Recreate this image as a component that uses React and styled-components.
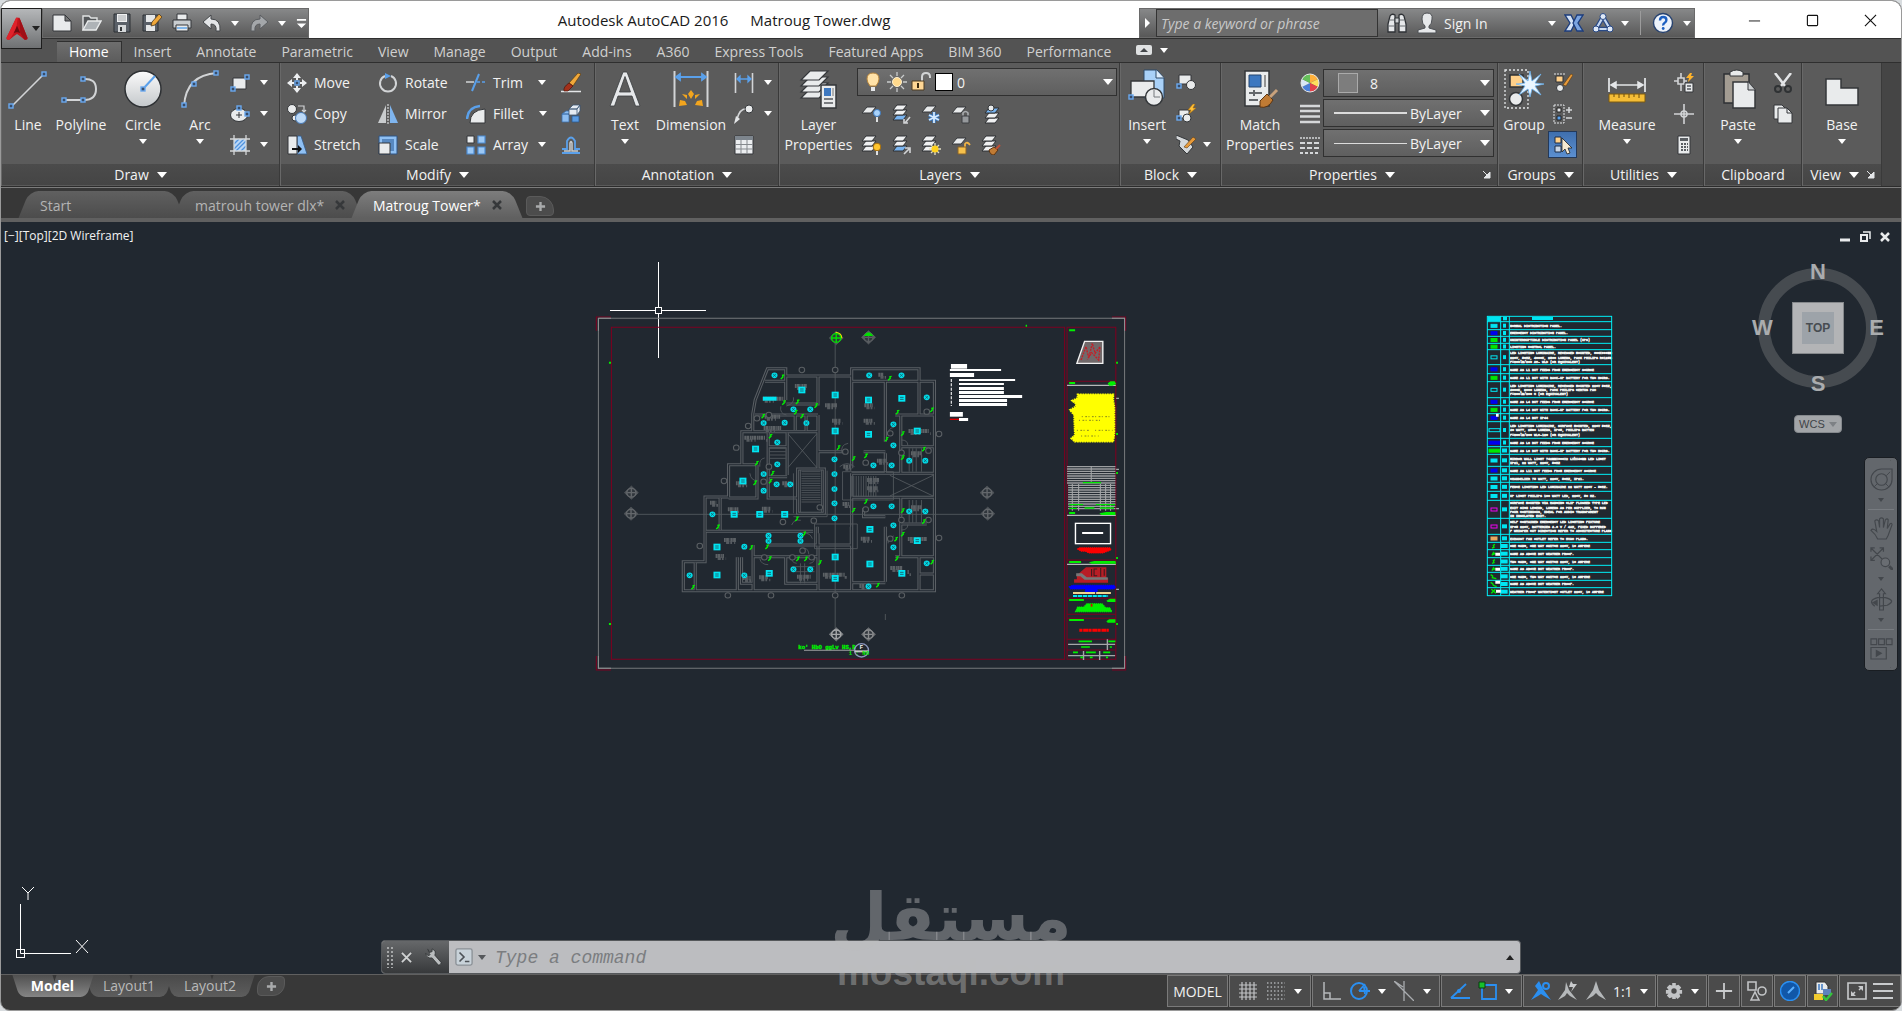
import { Fragment } from 'react'
import styled, { createGlobalStyle } from 'styled-components'

const GlobalStyle = createGlobalStyle`
    * {
        box-sizing: border-box;
    }
    body {
        margin: 0;
        background: #d8dcdf;
        font-family: "Open Sans", "Noto Sans", sans-serif;
        font-size: 14px;
        overflow: hidden;
    }
    button, input, select {
        font: inherit;
        color: inherit;
        background: none;
        border: 0;
        margin: 0;
        padding: 0;
    }
`

/* ---------- icons ---------- */

const paper = { fill: '#e9ebec', stroke: '#34373a', strokeWidth: 1 }
const wire = { fill: 'none', stroke: '#d2d4d6', strokeWidth: 1.6 }
const blue = { fill: 'none', stroke: '#5aa0ea', strokeWidth: 1.6 }

const Grip = ({ x, y }) => <rect x={x - 2} y={y - 2} width="4" height="4" fill="#3a4d68" stroke="#6aa9f0" strokeWidth="1.4" />

const Sheets = ({ blueAt, x = 0, y = 0 }) => [2, 1, 0].map(i => (
    <path
        key={i}
        d={`M${x + 5} ${y + 1 + i * 5}h10l-4 5h-10z`}
        fill={blueAt === i ? '#79b4f0' : '#f0f1f2'}
        stroke="#2e3134"
        strokeWidth="1"
    />
))

// every drawing is [viewBox size, content]
const drawings = {
    logo: [32, <>
        <path d="M15 2 3 27q0 3 4 2l5-4 4-3 4 3 5 4q4 1 4-2L19 2z" fill="#c3131b" />
        <path d="M15 2 3 27q0 3 4 2l8-13 2-14z" fill="#e0222b" />
        <path d="m16 12-4 9q4-2 8 0z" fill="#6d0a10" />
        <path d="m20 21 5 8q4 1 4-2L19 2z" fill="#9f0f16" />
    </>],
    newFile: [20, <path d="M1 2h12l6 6v10H1zM13 2v6h6" {...paper} />],
    open: [20, <>
        <path d="M1 17V3h6l2 2h6v3" fill="#55585b" stroke="#e1e3e4" strokeWidth="1.4" />
        <path d="m1 17 5-9h13l-5 9z" fill="#aeb3b7" stroke="#e9ebec" strokeWidth="1.4" />
    </>],
    save: [20, <>
        <path d="M2 1h16v18H2z" fill="#5a6068" stroke="#2d3034" />
        <path d="M5 1h10v8H5z" fill="#f0f1f2" />
        <path d="M6 3h8M6 5h8M6 7h8" stroke="#a7abae" />
        <path d="M6 12h8v7H6z" fill="#d5d8da" />
        <path d="M8 14h2v4H8z" fill="#34373a" />
    </>],
    saveAs: [20, <>
        <path d="M1 2h15v16H1z" fill="#5a6068" stroke="#2d3034" />
        <path d="M4 2h9v7H4zM4 12h9v6H4z" fill="#e5e7e8" />
        <path d="m9 13 1-4 7-8 3 3-7 8z" fill="#f0a83a" stroke="#4c3a20" strokeWidth=".8" />
    </>],
    print: [20, <>
        <path d="M5 1h10v6H5z" {...paper} />
        <path d="M1 7h18v8H1z" fill="#c9cdd0" stroke="#34373a" />
        <path d="M4 12h12v6H4z" {...paper} />
        <path d="M5 15h10" stroke="#60a6ea" strokeWidth="1.5" />
    </>],
    undo: [20, <path d="M1 9 9 2v4q10 0 9 12h-4q1-7-5-7v5z" fill="#e4e6e8" stroke="#44474a" />],
    redo: [20, <path d="m19 9-8-7v4Q1 6 2 18h4q-1-7 5-7v5z" fill="#a4a7aa" stroke="#5a5d60" />],
    menuLine: [12, <path d="M1 1h10v2H1zM1 6h10l-5 5z" fill="#fff" />],
    binoculars: [22, <>
        <path d="M4 4q2-3 5-1v17H2v-8zM18 4q-2-3-5-1v17h7v-8z" fill="#e6e8ea" stroke="#2f3236" strokeWidth="1.3" />
        <path d="M9 6h4v5H9z" fill="#cfd2d4" stroke="#2f3236" />
        <path d="M2 14h7M13 14h7M4 8h4M14 8h4" stroke="#6a6e72" />
    </>],
    person: [22, <path d="M11 1q6 0 5 6 0 5-3 7v2l7 2v3H2v-3l7-2v-2q-3-2-3-7 0-6 5-6z" fill="#e6e8ea" stroke="#4d5054" />],
    exchange: [20, <>
        <path d="M1 2h6l4 8-4 8H1l5-8z" fill="#d3e2f6" stroke="#1c3c7c" strokeWidth="1.3" />
        <path d="M19 2h-6l-4 8 4 8h6l-5-8z" fill="#7ba4e0" stroke="#1c3c7c" strokeWidth="1.3" />
    </>],
    a360: [22, <>
        <path d="M11 5 18 17H4z" fill="none" stroke="#2a4a86" strokeWidth="4.500" strokeLinejoin="round" />
        <path d="M11 5 18 17H4z" fill="none" stroke="#c7d9f2" strokeWidth="2.200" strokeLinejoin="round" />
        <g fill="#dfe9f7" stroke="#2a4a86"><circle cx="11" cy="4.500" r="3" /><circle cx="4" cy="17" r="3" /><circle cx="18" cy="17" r="3" /></g>
    </>],
    help: [22, <>
        <circle cx="11" cy="11" r="9.500" fill="#eef3fa" stroke="#27426f" strokeWidth="1.400" />
        <path d="M8 8.500q0-3.500 3.200-3.500t3.200 3q0 1.800-1.700 2.700T11.200 13.500" fill="none" stroke="#1d5fc0" strokeWidth="2.400" />
        <circle cx="11.200" cy="16.500" r="1.400" fill="#1d5fc0" />
    </>],
    minimize: [14, <path d="M1 7.500h12" stroke="#111" />],
    maximize: [14, <rect x="1.500" y="1.500" width="11" height="11" rx="1" fill="none" stroke="#111" strokeWidth="1.200" />],
    close: [14, <path d="m1 1 12 12M13 1 1 13" stroke="#111" strokeWidth="1.200" />],
    collapse: [16, <>
        <rect x="0" y="3" width="16" height="10" rx="2" fill="#dfe1e2" />
        <path d="m4 10 4-4 4 4z" fill="#44474a" />
    </>],
    line: [40, <><path d="M3 38 36 5" {...wire} /><Grip x={3} y={37} /><Grip x={36} y={5} /></>],
    polyline: [40, <>
        <path d="M3 31h20q12 0 12-11T22 10" {...wire} strokeWidth="2" />
        <Grip x={3} y={31} /><Grip x={22} y={31} /><Grip x={22} y={10} />
    </>],
    circle: [40, <>
        <circle cx="20" cy="20" r="18" fill="url(#disc)" stroke="#2e3134" strokeWidth="1.500" />
        <path d="M20 20 32 7" stroke="#5aa0ea" strokeWidth="2" /><Grip x={20} y={20} />
    </>],
    arc: [40, <><path d="M4 37Q6 6 37 4" {...wire} strokeWidth="2" /><Grip x={4} y={36} /><Grip x={14} y={15} /><Grip x={36} y={4} /></>],
    rectangle: [20, <><path d="M3 5h13v11H3z" {...paper} /><Grip x={3} y={16} /><Grip x={17} y={4} /></>],
    ellipse: [20, <><ellipse cx="9" cy="11" rx="8.500" ry="6.500" {...paper} /><path d="M9 8v6M6 11h6" stroke="#34373a" /><Grip x={9} y={4} /><Grip x={17} y={10} /></>],
    hatch: [20, <>
        <path d="M4 4h12v12H4z" fill="#b9d6f6" />
        <path d="m4 9 5-5M4 14 14 4M6 16 16 6M11 16l5-5" stroke="#4f92dd" strokeWidth="1.300" />
        <path d="M0 4h20M0 16h20M4 0v20M16 0v20" stroke="#d5d7d9" strokeWidth="1.300" />
    </>],
    move: [20, <>
        <path d="m10 0 4 5H6zM10 20l4-5H6zM0 10l5-4v8zM20 10l-5-4v8z" fill="#eceef0" />
        <path d="M10 4v3M10 13v3M4 10h3M13 10h3" stroke="#eceef0" strokeWidth="2" />
        <Grip x={10} y={10} />
    </>],
    copy: [20, <>
        <circle cx="5" cy="5" r="4.500" {...paper} />
        <circle cx="8" cy="14" r="3" {...paper} />
        <circle cx="14" cy="14" r="5.500" fill="#bcd9f7" stroke="#4779b5" />
        <path d="M11 2h6v5M15 6l2 2 2-2" {...wire} strokeWidth="1.200" />
    </>],
    stretch: [20, <>
        <path d="M10 1h4l6 18H10z" fill="#8fc0f3" stroke="#345a8a" strokeWidth=".8" />
        <path d="M1 1h9v18H1z" {...paper} />
        <path d="M5 13h6v-3l4 4-4 4v-3H5z" fill="#111" />
    </>],
    rotate: [20, <><path d="M13 3a8 8 0 1 1-6 0" {...wire} strokeWidth="2" /><path d="m7 0 6 3-6 3z" fill="#5aa0ea" /></>],
    mirror: [20, <><path d="M8 1v18H0z" fill="#c9ccce" /><path d="M12 1v18h8z" fill="#7fb5ef" /><path d="M10 0v20" stroke="#eceef0" strokeDasharray="2 1" /></>],
    scale: [20, <><path d="M1 1h18v18H1z" fill="#8fc0f3" stroke="#2f5584" /><path d="M4 4h12v12H4z" fill="#5788c0" /><path d="M1 8h11v11H1z" {...paper} /></>],
    trim: [20, <><path d="M0 9h8" {...wire} /><path d="M11 9h9" {...blue} strokeDasharray="3 2" /><path d="m6 18 7-17" {...blue} strokeWidth="2" /></>],
    fillet: [20, <><path d="M4 19q0-13 15-14v14z" {...paper} /><path d="M1 15Q2 3 14 2" {...blue} strokeWidth="2.500" /></>],
    array: [20, <>
        <path d="M1 1h7v7H1z" {...paper} />
        <path d="M12 1h7v7h-7zM1 12h7v7H1zM12 12h7v7h-7z" fill="#9cc8f5" stroke="#4b8bd4" strokeWidth="1.200" />
    </>],
    erase: [20, <>
        <path d="M0 18.500h20" stroke="#e4e6e8" strokeWidth="1.500" />
        <path d="m8 10 9-10 3 1-8 12z" fill="#f0a83a" stroke="#5c3d12" strokeWidth=".7" />
        <path d="m8 10 4 3-5 5H3q-1-4 5-8z" fill="#a3301a" stroke="#4a150b" strokeWidth=".7" />
    </>],
    explode: [20, <>
        <path d="m1 10 4-3h6l-3 3zM1 10h7v8H1z" fill="#8dbdf0" stroke="#3c6ea9" strokeWidth=".8" />
        <path d="m8 5 4-4h7l-3 4zM8 5h8v6H8zM16 5l3-4v6l-3 4" fill="#e5ebf2" stroke="#3c5775" strokeWidth=".8" />
        <path d="M11 12h7v6h-7z" fill="#5a9be2" stroke="#2c5b93" strokeWidth=".8" />
    </>],
    offset: [20, <>
        <path d="M1 18h18M1 14h5V6q4-7 8 0v8h5" fill="none" stroke="#5aa0ea" strokeWidth="1.800" />
        <path d="M3 16h6V8q1-3 2 0v8h6" fill="none" stroke="#c9cbcd" strokeWidth="1.500" />
    </>],
    text: [40, <path d="M5 37 18 3h4l13 34h-4.500L27 27H13L9.500 37zM14.500 23h11L20 7.500z" fill="#e6e8ea" stroke="#3a3d40" strokeWidth=".8" />],
    dimension: [40, <>
        <path d="M3.500 2v36M36.500 2v36" {...wire} strokeWidth="2" />
        <path d="M5 8h30M5 8l4-3v6zM35 8l-4-3v6z" stroke="#5aa0ea" strokeWidth="1.800" fill="#5aa0ea" />
        <path d="m8 37 1-6 5 1 2 4zM32 37l-1-6-5 1-2 4zM11 25l5 1v4zM29 25l-5 1v4zM20 21l3 4-3 5-3-5z" fill="#f2a51e" />
    </>],
    linear: [20, <><path d="M1.500 0v20M18.500 0v20" {...wire} /><path d="M3 6h14M3 6l3-3v6zM17 6l-3-3v6z" {...blue} fill="#5aa0ea" strokeWidth="1.300" /></>],
    leader: [20, <><path d="M3 15Q6 4 13 5" {...wire} /><path d="m0 20 2-8 4 3z" fill="#e4e6e8" /><circle cx="15" cy="5" r="4" {...paper} /></>],
    table: [20, <>
        <path d="M1 1h18v18H1z" fill="#eceef0" stroke="#34373a" />
        <path d="M1 1h18v4H1z" fill="#7d858d" />
        <path d="M7 5v14M13 5v14M1 9.500h18M1 14h18" stroke="#85898d" />
    </>],
    layerProps: [40, <>
        {[20, 14, 8, 2].map(y => <path key={y} d={`M11 ${y}h18l-9 9H2z`} {...paper} strokeWidth="1.200" />)}
        <path d="M22 16h15v23H22z" {...paper} strokeWidth="1.500" />
        <path d="M25 19h7v8h-7z" fill="#3d78c0" />
        <path d="M25 30h9M25 34h9" stroke="#55595d" strokeWidth="1.500" />
        <path d="M34 19v8" stroke="#777" />
    </>],
    bulb: [20, <><path d="M10 1q6 0 6 6 0 3-3 7H7Q4 10 4 7q0-6 6-6z" fill="#ffe2a8" stroke="#b9863c" /><path d="M8 15h4v4H8z" fill="#e6e8ea" /></>],
    sun: [20, <><path d="M10 0v4M10 16v4M0 10h4M16 10h4M3 3l3 3M14 14l3 3M17 3l-3 3M3 17l3-3" stroke="#c9cbcc" strokeWidth="1.300" /><circle cx="10" cy="10" r="4.500" fill="#ffd98c" stroke="#fff1d0" /></>],
    unlock: [20, <><path d="M11 10V5q0-4 4-4t4 4v1" {...wire} strokeWidth="2" /><path d="M1 9h12v9H1z" fill="#ffd795" stroke="#4c3a20" /><path d="M7 11v5" stroke="#3b2a10" strokeWidth="2" /></>],
    layOff: [20, <><path d="M6 3h9l-5 6H1z" {...paper} /><circle cx="16" cy="9" r="3.500" fill="#a9d3fb" stroke="#3c78bd" /><path d="M15 13h2v5h-2z" fill="#dfe1e2" /></>],
    layIso: [20, <><Sheets blueAt={2} x={1} /><path d="m19 13-5 6M13 15v4h4" {...wire} /></>],
    layFreeze: [20, <><path d="M6 2h9l-5 6H1z" {...paper} /><path d="M13 8v11M8 11l10 5M18 11 8 16" stroke="#3c78bd" strokeWidth="3.500" /><path d="M13 8v11M8 11l10 5M18 11 8 16" stroke="#d5eafe" strokeWidth="1.800" /></>],
    layLock: [20, <><path d="M6 3h9l-5 6H1z" {...paper} /><path d="M12 13V9q2.500-3 5 0v4" {...wire} stroke="#a9acaf" /><path d="M11 12h7v7h-7z" fill="#96999c" stroke="#3c3f42" /></>],
    layCurrent: [20, <><Sheets blueAt={0} x={3} y={3} /><circle cx="10" cy="4" r="3" {...paper} /></>],
    layOn: [20, <><Sheets /><circle cx="16" cy="12" r="3.800" fill="#ffc52e" stroke="#a56d0c" /><path d="M15 16h2v4h-2z" fill="#dfe1e2" /></>],
    layUniso: [20, <><Sheets blueAt={2} x={1} /><path d="m13 19 5-5M14 13h5v5" {...wire} /></>],
    layThaw: [20, <><Sheets /><path d="M14 8v12M8 14h12M10 10l8 8M18 10l-8 8" stroke="#e3e0c8" strokeWidth="1.300" /><circle cx="14" cy="14" r="3.500" fill="#ffd21f" /></>],
    layUnlock: [20, <><path d="M6 3h9l-5 6H1z" {...paper} /><path d="M14 13V9q2-3 5 1" fill="none" stroke="#f1b445" strokeWidth="1.800" /><path d="M7 12h8v7H7z" fill="#f5c04b" stroke="#8c6428" /></>],
    layMatch: [20, <><Sheets /><path d="m8 15 5-3 4 3-4 5q-4 0-5-5z" fill="#c07b34" stroke="#5c3512" /><path d="m15 14 4-4" stroke="#c24f36" strokeWidth="2" /></>],
    insert: [40, <>
        <path d="M17 1h13l7 8v20H17z" fill="#a9d1f8" stroke="#2f4a69" />
        <path d="M29 1v8h8" fill="#dcecfb" stroke="#2f4a69" />
        <path d="M4 12h23v16H4z" {...paper} strokeWidth="1.300" />
        <circle cx="27" cy="28" r="8.500" {...paper} strokeWidth="1.500" />
        <path d="M27 21v7h6" stroke="#74787c" fill="none" /><Grip x={4} y={28} />
    </>],
    blockCreate: [20, <><path d="M3 2h12v9H3z" {...paper} /><circle cx="15" cy="12" r="4.500" {...paper} /><Grip x={3} y={13} /></>],
    blockEdit: [20, <><path d="M3 6h10v8H3z" {...paper} /><circle cx="11" cy="14" r="4" {...paper} /><path d="m17 0-5 6h3l-2 4 7-6h-3l2-4z" fill="#ffc13a" stroke="#a86b0c" strokeWidth=".6" /><Grip x={3} y={14} /></>],
    blockAttr: [20, <><path d="M0 0v4l4 2-1 5 8 8 6-7-5-7z" fill="#d5d8da" stroke="#34373a" /><path d="m8 12 9-10 3 2-9 9z" fill="#e79a3a" stroke="#5c3d12" strokeWidth=".6" /></>],
    match: [40, <>
        <path d="M5 2h24v35H5z" {...paper} strokeWidth="1.500" />
        <path d="M9 6h12v12H9z" fill="#3d78c0" stroke="#24446f" /><path d="M25 6v12" stroke="#777" strokeWidth="1.500" />
        <path d="M9 24h13M14 21v6M9 31h9" stroke="#64686c" strokeWidth="2" />
        <path d="m20 32 7-7 6 6q-5 9-13 7z" fill="#c07b34" stroke="#5c3512" /><path d="m30 28 7-7" stroke="#c9a27c" strokeWidth="3" />
    </>],
    wheel: [20, <>
        <path d="M10 10V1a9 9 0 0 1 8 5z" fill="#ffb13c" /><path d="m10 10 8-4a9 9 0 0 1 0 8z" fill="#ffe05c" />
        <path d="m10 10 8 4a9 9 0 0 1-8 5z" fill="#e3434a" /><path d="M10 10v9a9 9 0 0 1-8-5z" fill="#4b7fd8" />
        <path d="m10 10-8 4a9 9 0 0 1 0-8z" fill="#d9e7f5" /><path d="M10 10 2 6a9 9 0 0 1 8-5z" fill="#65c05a" />
        <circle cx="10" cy="10" r="9" fill="none" stroke="#e4e6e8" />
    </>],
    weight: [20, <path d="M0 2h20M0 7h20M0 12.500h20M0 18h20" stroke="#d5d7d9" strokeWidth="2.500" />],
    ltype: [20, <><path d="M0 3h20" stroke="#d5d7d9" strokeWidth="1.500" strokeDasharray="2 1" /><path d="M0 8h20M0 13h20" stroke="#d5d7d9" strokeWidth="1.800" strokeDasharray="5 2" /><path d="M0 18h20" stroke="#d5d7d9" strokeWidth="1.800" strokeDasharray="3 2" /></>],
    group: [40, <>
        <path d="M1 1h23v38H1z" fill="none" stroke="#e4e6e8" strokeWidth="1.300" strokeDasharray="2 2" />
        <path d="M6 6h13v12H6z" fill="#ffd08a" stroke="#2e3134" strokeWidth="1.500" />
        <circle cx="12" cy="30" r="6.500" {...paper} strokeWidth="1.500" />
        <path d="m26 2 2 10 9-7-6 9 9 1-9 2 6 9-9-6-2 8-2-8-9 6 6-9-9-2 9-1-6-9 9 7z" fill="#eaf6ff" stroke="#6cb2ef" strokeWidth=".8" />
    </>],
    ungroup: [20, <><path d="M1 1h11" fill="none" stroke="#e4e6e8" strokeDasharray="2 1" /><path d="M3 3h7v6H3z" fill="#ffd08a" stroke="#2e3134" /><circle cx="7" cy="15" r="3.500" {...paper} /><path d="m10 12 8-11 2 1-7 11z" fill="#e79a3a" stroke="#5c3d12" strokeWidth=".6" /></>],
    groupEdit: [20, <><path d="M1 1h10v18H1z" fill="none" stroke="#e4e6e8" strokeDasharray="2 1" /><path d="M4 4h4v4H4z" fill="#e4e6e8" stroke="#222" /><path d="M4 12h4v4H4z" fill="#5aa0ea" stroke="#222" /><path d="M13 6h6M16 3v6M13 14h6" stroke="#d5d7d9" strokeWidth="1.500" /></>],
    groupSelect: [20, <><path d="M2 2h6v6H2z" fill="#ffd08a" stroke="#1c2c46" /><path d="M2 11h6v6H2z" fill="#c9d6e6" stroke="#1c2c46" /><path d="M9 3v14l3-3 2 5 3-1-2-5h4z" fill="#f5e9d2" stroke="#222" strokeWidth=".8" /></>],
    measure: [40, <>
        <path d="M2 9v14M38 9v14" {...wire} strokeWidth="2" />
        <path d="M4 16h32M4 16l5-3v6zM36 16l-5-3v6z" fill="#e4e6e8" stroke="#e4e6e8" strokeWidth="1.500" />
        <path d="M2 25h36v8H2z" fill="#f4bd37" stroke="#7c5a10" />
        <path d="M7 25v3M12 25v4M17 25v3M22 25v4M27 25v3M32 25v4" stroke="#6c4d0c" />
    </>],
    quickCalc: [20, <><path d="M7 0v18M0 8h13" {...wire} /><path d="M4 5h6v6H4z" fill="#5b5b5b" stroke="#d2d4d6" strokeWidth="1.600" /><path d="m16 0-4 5h3l-1 4 6-6h-3l1-3z" fill="#ffb32a" /><path d="M11 10h8v9h-8z" {...paper} /><path d="M13 13h4M13 16h4" stroke="#55595d" strokeWidth="1.300" /></>],
    point: [20, <><path d="M10 0v20M0 10h20" {...wire} /><circle cx="10" cy="10" r="3" {...wire} /></>],
    calculator: [20, <><path d="M4 1h12v18H4z" {...paper} /><path d="M6 3h8v3H6z" fill="#5a5e62" /><path d="M7 9h7M7 12h7M7 15h7" stroke="#5a5e62" strokeWidth="2" strokeDasharray="2 1" /></>],
    paste: [40, <>
        <path d="M6 5h25v29H6z" fill="#a39c92" stroke="#2e3134" strokeWidth="1.500" />
        <path d="M12 7V3q7-4 13 0v4z" {...paper} />
        <path d="M15 13h15l7 8v18H15z" {...paper} strokeWidth="1.500" /><path d="M30 13v8h7" fill="#cfd2d4" stroke="#34373a" />
    </>],
    cut: [20, <><path d="m2 0 10 13M18 0 8 13" stroke="#e4e6e8" strokeWidth="2.500" /><circle cx="5" cy="16" r="3" fill="none" stroke="#2f3234" strokeWidth="2" /><circle cx="15" cy="16" r="3" fill="none" stroke="#2f3234" strokeWidth="2" /></>],
    copyClip: [20, <><path d="M1 1h8l3 3v11H1z" {...paper} /><path d="M5 4h9l5 5v10H5z" {...paper} /><path d="M14 4v5h5" fill="none" stroke="#34373a" /></>],
    base: [40, <path d="M4 10h15v9h17v17H4z" {...paper} strokeWidth="1.500" />],
    wrench: [20, <path d="m4 1 2 4 3-1V1q5 2 3 7l7 8q0 3-3 3l-7-8Q3 12 2 6l3 3 2-2" fill="#b9bcbe" stroke="#2a2c2e" strokeWidth=".8" />],
    prompt: [20, <><rect x="1" y="1" width="18" height="18" rx="2" fill="#c8d2d9" stroke="#8b9197" strokeWidth="1.500" /><path d="m5 5 5 5-5 5M11 15h5" fill="none" stroke="#4d5257" strokeWidth="1.800" /></>],
    grid: [20, <path d="M4 1v18M8 1v18M12 1v18M16 1v18M1 4h18M1 8h18M1 12h18M1 16h18" stroke="#c2c4c6" strokeWidth="1.200" fill="none" />],
    snap: [20, <path d="M1 2h18M1 6h18M1 10h18M1 14h18M1 18h18" stroke="#a9acaf" strokeWidth="1.500" strokeDasharray="1.500 2" />],
    ortho: [20, <path d="M3 1v17h17M3 12h6v6" fill="none" stroke="#b5b8ba" strokeWidth="1.500" />],
    polar: [20, <><circle cx="9" cy="10" r="8" fill="none" stroke="#2b8ff0" strokeWidth="2" /><path d="m9 10 6-7M9 10h11M14 6l1 7" fill="none" stroke="#2b8ff0" strokeWidth="1.800" /></>],
    iso: [20, <path d="m0 0 20 20M10 0v20M0 0l9 6" fill="none" stroke="#a9acaf" strokeWidth="1.300" />],
    track: [20, <><path d="M1 17 16 3M1 17h19" stroke="#2b8ff0" strokeWidth="1.800" /><circle cx="9" cy="10" r="2" fill="#2b8ff0" /></>],
    osnap: [20, <><path d="M4 4h14v14H4z" fill="none" stroke="#2b8ff0" strokeWidth="1.800" /><path d="M1 1h6v6H1z" fill="#18c02b" stroke="#093d10" /></>],
    annoBlue: [20, <><path d="m8 0 4 8 8 11-7-4-3-2-3 2-7 4 7-10-3-4z" fill="#2b8ff0" /><circle cx="15" cy="5" r="3" fill="#4b4b4b" stroke="#2b8ff0" strokeWidth="2" /></>],
    annoAuto: [20, <><path d="m8 1 3 8 8 10-7-4-3-3-2 3-7 4 7-10z" fill="#b5b8ba" /><path d="m13 0-2 6h4l-2 5 6-8h-4z" fill="#c9cbcd" /></>],
    anno: [20, <path d="m10 0 3 9 7 10-7-4-3-3-3 3-7 4L7 9z" fill="#b5b8ba" />],
    gear: [20, <><path d="M8 1h4v3l3-1 3 3-2 3h3v4h-3l1 3-3 3-2-2v2H8v-2l-3 1-3-3 2-2H1V9h3L2 6l3-3 3 1z" fill="#c2c4c6" /><circle cx="10" cy="10" r="3" fill="#4b4b4b" /></>],
    plus: [20, <path d="M10 1v18M1 10h18" stroke="#c9cbcd" strokeWidth="2" />],
    shapes: [20, <><path d="M1 1h8v8H1z" fill="none" stroke="#c2c4c6" strokeWidth="1.600" /><circle cx="15" cy="10" r="4" fill="none" stroke="#c2c4c6" strokeWidth="1.600" /><path d="m8 11 4 8H4z" fill="none" stroke="#c2c4c6" strokeWidth="1.500" /></>],
    clean: [20, <><circle cx="10" cy="10" r="9.500" fill="#1157a8" stroke="#2b8ff0" strokeWidth="1.500" /><path d="m8 12 6-6" stroke="#5ab0ff" strokeWidth="2" /></>],
    tray: [20, <><path d="M3 1h9l3 4v8H3z" fill="#e9ebec" stroke="#333" /><path d="M6 3v6M9 3v6" stroke="#3d78c0" strokeWidth="1.500" /><path d="M10 8h8v6h-8z" fill="#5d83bd" /><path d="M1 13h9v6H1z" fill="#f3cc2e" /><path d="m10 15 3 4 6-7" fill="none" stroke="#35c43c" strokeWidth="2.500" /></>],
    expand: [20, <><path d="M1 2h18v16H1z" fill="none" stroke="#c9cbcd" strokeWidth="1.600" /><path d="M11 5h5v5zM4 10v5h5z" fill="#c9cbcd" /><path d="m12 9 3-3M5 14l3-3" stroke="#c9cbcd" strokeWidth="1.500" /></>],
    burger: [20, <path d="M0 3h20M0 10h20M0 17h20" stroke="#c9cbcd" strokeWidth="2" />],
    launcher: [10, <path d="M1 1l6 6M8 2v6H2z" stroke="#e4e6e8" fill="#e4e6e8" />],
    vpMin: [12, <path d="M1 9h10" stroke="#e9ebec" strokeWidth="3" />],
    vpRestore: [12, <><path d="M4 1h7v7" fill="none" stroke="#e9ebec" strokeWidth="1.500" /><path d="M2 4h6v6H2z" fill="none" stroke="#e9ebec" strokeWidth="2" /></>],
    vpClose: [12, <path d="m2 2 8 8M10 2l-8 8" stroke="#e9ebec" strokeWidth="2.500" />],
    tabClose: [12, <path d="m2 2 8 8M10 2l-8 8" stroke="#36383a" strokeWidth="2.500" />],
    barClose: [12, <path d="m1 1 10 10M11 1 1 11" stroke="#d0d2d3" strokeWidth="2" />],
    tabPlus: [12, <path d="M6 1v10M1 6h10" stroke="#a9abac" strokeWidth="2.600" />],
    navWheel: [24, <><path d="M12 1h11v11a11 11 0 1 1-11-11z" fill="none" stroke="#43474c" strokeWidth="1.200" /><circle cx="12" cy="12" r="6" fill="none" stroke="#43474c" strokeWidth="1.200" /><path d="m8 16-4 4M16 16l4 4M17 8l4-4" stroke="#43474c" /></>],
    hand: [24, <path d="M8 23q-2-5-7-9 2-3 6 1L5 4q2-2 4 0l1 7V2q2-2 4 0v9l2-8q2-2 3 0l-1 9 3-5q2-1 2 1l-4 11-2 4z" fill="none" stroke="#43474c" strokeWidth="1.200" />],
    zoom: [24, <><path d="m1 1 13 13M14 1 1 14M1 5V1h4M10 1h4v4M1 10v4h4" fill="none" stroke="#43474c" strokeWidth="1.300" /><circle cx="16" cy="16" r="4.500" fill="#696d72" stroke="#43474c" strokeWidth="1.200" /><path d="m20 20 4 4" stroke="#43474c" strokeWidth="3" /></>],
    orbit: [24, <><path d="M5 19Q-3 13 8 10h8q12 3 2 8l-8 1" fill="none" stroke="#43474c" strokeWidth="1.300" /><path d="M10 23V6H8l4-5 4 5h-2v17z" fill="none" stroke="#43474c" strokeWidth="1.200" /><path d="m2 15 6-3v7z" fill="#43474c" /></>],
    motion: [24, <><path d="M1 2h6v6H1zM9 2h6v6H9zM17 2h6v6h-6zM1 11h16v12H1z" fill="none" stroke="#43474c" strokeWidth="1.200" /><path d="m6 13 7 4-7 4z" fill="#43474c" /></>],
    dot: [10, <><circle cx="5" cy="5" r="4.500" fill="#4c5055" /><path d="m3 3 4 4M7 3 3 7" stroke="#777b80" /></>],
}

const Icon = ({ name, size = 20 }) => {
    const [box, content] = drawings[name]
    return <svg width={size} height={size} viewBox={`0 0 ${box} ${box}`} aria-hidden="true">{content}</svg>
}

const Caret = styled.span`
    flex: none;
    width: 0;
    height: 0;
    border: ${({ $size = 4 }) => $size}px solid transparent;
    border-bottom-width: 0;
    border-top: ${({ $size = 4 }) => $size + 1}px solid ${({ $color }) => $color || '#fff'};
`

/* ---------- window and title bar ---------- */

const Window = styled.div`
    display: flex;
    flex-direction: column;
    height: 100vh;
    border: 1px solid #9a9a9a;
    border-radius: 10px;
    overflow: hidden;
    background: #383838;
    color: #f2f2f2;
`

const TitleBar = styled.header`
    display: flex;
    align-items: flex-end;
    height: 37px;
    background: #fff;
    flex: none;
`

const AppButton = styled.button`
    position: relative;
    z-index: 1;
    display: flex;
    align-items: center;
    justify-content: center;
    gap: 2px;
    width: 41px;
    height: 41px;
    margin-bottom: -11px;
    background: linear-gradient(#b5b7b9, #6f7173);
    border: 1px solid #1d1d1d;
`

const ToolStrip = styled.div`
    display: flex;
    align-items: center;
    height: 30px;
    background: linear-gradient(#878889, #585858);
    border: 1px solid #6a6a6a;
`

const QuickAccess = styled(ToolStrip)`
    gap: 10px;
    width: 267px;
    padding-left: 9px;
`

const FlatButton = styled.button`
    display: flex;
    align-items: center;
    gap: ${({ $gap = 0 }) => $gap}px;
    flex: none;
`

const Title = styled.h1`
    flex: 1;
    display: flex;
    justify-content: center;
    gap: 22px;
    margin: 0;
    font-size: 15px;
    font-weight: 400;
    line-height: 36px;
    color: #1a1a1a;
    white-space: nowrap;
`

const InfoCenter = styled(ToolStrip)`
    width: 556px;
    gap: 8px;
    padding: 0 3px 0 5px;
`

const SearchInput = styled.input`
    width: 225px;
    height: 28px;
    padding: 0 4px;
    background: #6d6d6d;
    border: 1px solid #333;
    &::placeholder {
        color: #c9c9c9;
        font-style: italic;
        opacity: 1;
    }
`

const SideArrow = styled.span`
    border: 5px solid transparent;
    border-left-color: #fff;
    border-right-width: 0;
    margin-right: -2px;
`

const SignIn = styled.button`
    display: flex;
    align-items: center;
    gap: 6px;
    width: 142px;
    span:last-child {
        margin-left: auto;
    }
`

const Divider = styled.span`
    width: 1px;
    height: 24px;
    background: #9c9c9c;
    margin: 0 3px;
`

const WindowButtons = styled.div`
    display: flex;
    justify-content: flex-end;
    width: 206px;
    height: 36px;
    padding-right: 2px;
`

const WindowButton = styled.button`
    display: flex;
    align-items: center;
    justify-content: center;
    width: 58px;
`

/* ---------- ribbon ---------- */

const RibbonTabs = styled.nav`
    display: flex;
    align-items: stretch;
    height: 25px;
    padding: 2px 0 0 56px;
    background: #535353;
    border-top: 1px solid #2f2f2f;
    border-bottom: 1px solid #2f2f2f;
    flex: none;
`

const RibbonTab = styled.button`
    padding: 0 12px;
    line-height: 20px;
    color: ${({ $active }) => $active ? '#fff' : '#d0d0d0'};
    background: ${({ $active }) => $active ? 'linear-gradient(#6e6e6e, #5c5c5c)' : 'none'};
    border: 1px solid ${({ $active }) => $active ? '#2f2f2f' : 'transparent'};
    border-width: 1px 1px 0 0;
    white-space: nowrap;
`

const Ribbon = styled.section`
    display: flex;
    height: 124px;
    background: #454545;
    border-bottom: 1px solid #2c2c2c;
    flex: none;
`

const PanelBox = styled.div`
    display: flex;
    flex-direction: column;
    width: ${({ $width }) => $width}px;
    flex: none;
    border-right: 1px solid #3a3a3a;
    border-left: 1px solid #686868;
    background: #5b5b5b;
`

const PanelBody = styled.div`
    display: grid;
    grid-template-columns: ${({ $columns }) => $columns};
    height: 101px;
    padding-top: 4px;
`

const PanelTitle = styled.button`
    display: flex;
    align-items: center;
    flex: 1;
    padding-right: ${({ $tight }) => $tight ? 5 : 0}px;
    background: linear-gradient(#4b4b4b, #454545);
    border-bottom: 1px solid #5a5a5a;
    line-height: 20px;
    white-space: nowrap;
`

const PanelName = styled.span`
    flex: 1;
    display: flex;
    align-items: center;
    justify-content: center;
    gap: 8px;
`

const LargeButton = styled.button`
    display: flex;
    flex-direction: column;
    align-items: center;
    align-self: start;
    padding-top: 2px;
    line-height: 20px;
    svg {
        margin-bottom: 6px;
    }
    ${Caret} {
        margin-top: 4px;
    }
`

const SmallColumn = styled.div`
    display: grid;
    grid-template-rows: repeat(3, 31px);
    align-content: start;
    padding-left: ${({ $pad = 8 }) => $pad}px;
`

const SmallButton = styled.button`
    display: flex;
    align-items: center;
    gap: 7px;
    text-align: left;
    white-space: nowrap;
    ${Caret} {
        margin-left: ${({ $menuGap = 3 }) => $menuGap}px;
    }
`

const PressedButton = styled(SmallButton)`
    justify-content: center;
    width: 29px;
    height: 27px;
    margin: 2px 0 0 -5px;
    background: linear-gradient(#3f6fae, #5b8fd0);
    border: 1px solid #23395a;
`

const LayerTools = styled.div`
    padding: 1px 2px 0 0;
`

const IconRow = styled.div`
    display: flex;
    gap: 10px;
    height: 31px;
    padding-left: 4px;
`

const Combo = styled.div`
    display: flex;
    align-items: center;
    gap: ${({ $gap = 4 }) => $gap}px;
    height: 28px;
    padding: 0 3px 0 ${({ $pad = 5 }) => $pad}px;
    margin-bottom: 2px;
    background: linear-gradient(#707070, #5f5f5f);
    border: 1px solid #303030;
    select {
        flex: 1;
        min-width: 0;
        appearance: none;
    }
    option {
        color: #222;
    }
`

const Swatch = styled.span`
    width: ${({ $size }) => $size}px;
    height: ${({ $size }) => $size}px;
    background: ${({ $color }) => $color};
    border: 1px solid ${({ $edge }) => $edge};
`

const SampleLine = styled.span`
    width: 73px;
    height: ${({ $thick }) => $thick}px;
    background: #dcdcdc;
`

const ComboStack = styled.div`
    padding: 2px 3px 0 0;
`

function Panel({ title, width, columns, launcher, plain, children }) {
    return (
        <PanelBox $width={width}>
            <PanelBody $columns={columns}>{children}</PanelBody>
            <PanelTitle $tight={launcher}>
                <PanelName>
                    {title}
                    {!plain && <Caret $size={5} />}
                </PanelName>
                {launcher && <Icon name="launcher" size={10} />}
            </PanelTitle>
        </PanelBox>
    )
}

function Large({ icon, label, menu }) {
    return (
        <LargeButton>
            <Icon name={icon} size={40} />
            {label.split('\n').map(part => <span key={part}>{part}</span>)}
            {menu && <Caret />}
        </LargeButton>
    )
}

function Small({ icon, label, menu, menuGap }) {
    return (
        <SmallButton $menuGap={menuGap} aria-label={label ? undefined : icon}>
            <Icon name={icon} />
            {label}
            {menu && <Caret />}
        </SmallButton>
    )
}

/* ---------- document tabs ---------- */

const DocTabs = styled.nav`
    display: flex;
    align-items: flex-end;
    height: 35px;
    padding-left: 23px;
    background: #373737;
    border-top: 1px solid #7c7c7c;
    border-bottom: 4px solid #606060;
    flex: none;
`

const DocTab = styled.button`
    position: relative;
    z-index: ${({ $active }) => $active ? 1 : 0};
    display: flex;
    align-items: center;
    gap: 10px;
    width: ${({ $width }) => $width}px;
    height: 27px;
    padding: 1px 0 0 16px;
    color: ${({ $active }) => $active ? '#fff' : '#b4b4b4'};
    white-space: nowrap;
    &::before, &::after {
        content: '';
        position: absolute;
        z-index: -1;
        top: 0;
        bottom: 0;
        background: ${({ $active }) => $active ? 'linear-gradient(#7d7d7d, #606060)' : 'linear-gradient(#606060, #4c4c4c)'};
    }
    &::before {
        left: 0;
        right: 45%;
        border-radius: 9px 0 0 0;
        transform: skewX(-22deg);
    }
    &::after {
        left: 45%;
        right: 0;
        border-radius: 0 9px 0 0;
        transform: skewX(22deg);
    }
`

const AddTab = styled.button`
    display: flex;
    align-items: center;
    justify-content: center;
    width: 28px;
    height: 20px;
    margin: ${({ $margin }) => $margin};
    background: #4c4c4c;
    border: 1px solid #5a5a5a;
    border-radius: ${({ $radius }) => $radius};
`

/* ---------- drawing area ---------- */

const Canvas = styled.main`
    position: relative;
    flex: 1;
    background: #212830;
    overflow: hidden;
`

const ViewLabel = styled.div`
    padding: 6px 3px;
    font-size: 12px;
    line-height: 16px;
`

const Drawing = styled.svg`
    position: absolute;
    left: ${({ $left }) => $left}px;
    top: ${({ $top }) => $top}px;
`

const UcsIcon = styled.svg`
    position: absolute;
    left: 13px;
    bottom: 14px;
`

const ViewButtons = styled.div`
    position: absolute;
    top: 9px;
    right: 10px;
    display: flex;
    gap: 8px;
`

const ViewCube = styled.div`
    position: absolute;
    top: 38px;
    right: 17px;
    display: grid;
    grid-template: 42px 52px 42px / 40px 52px 40px;
    place-items: center;
    color: #aaacae;
    font: bold 22px "Liberation Sans", sans-serif;
    &::before {
        content: '';
        position: absolute;
        inset: 8px 6px;
        border: 12px solid #464b50;
        border-radius: 50%;
    }
    span, button {
        position: relative;
    }
`

const Direction = styled.span`
    grid-area: ${({ $area }) => $area};
    place-self: ${({ $place }) => $place};
    line-height: 24px;
`

const TopFace = styled.button`
    grid-area: 2 / 2;
    width: 52px;
    height: 52px;
    background: #9da3a9;
    border: 10px solid #b3b4b6;
    outline: 1px solid #85888b;
    outline-offset: -1px;
    color: #484d52;
    font: bold 12px "Liberation Sans", sans-serif;
`

const Wcs = styled.button`
    position: absolute;
    top: 193px;
    right: 59px;
    display: flex;
    align-items: center;
    justify-content: space-evenly;
    width: 48px;
    height: 18px;
    background: #a2a5a8;
    border: 1px solid #85898d;
    border-radius: 4px;
    color: #3f4347;
    font: 11px "Liberation Sans", sans-serif;
`

const NavBar = styled.div`
    position: absolute;
    top: 235px;
    right: 3px;
    display: flex;
    flex-direction: column;
    align-items: center;
    width: 34px;
    height: 214px;
    padding: 2px;
    gap: 7px;
    background: #63676c;
    border: 1px solid #191d22;
    border-radius: 5px;
    hr {
        width: 26px;
        margin: 0;
        border: 0;
        border-top: 1px solid #777b80;
    }
    > svg {
        align-self: flex-end;
    }
`

const CommandBar = styled.div`
    position: absolute;
    left: 20%;
    right: 20%;
    bottom: 0;
    display: flex;
    height: 34px;
    border: 1px solid #55585b;
    border-radius: 4px;
    overflow: hidden;
    background: #bcbdc0;
`

const CommandTools = styled.div`
    display: flex;
    align-items: center;
    gap: 12px;
    width: 67px;
    padding-left: 4px;
    background: linear-gradient(#66686a, #37393b);
`

const Handle = styled.span`
    width: 7px;
    height: 22px;
    background: radial-gradient(circle, #a5a7a8 1px, transparent 1px) 0 0 / 4px 4px;
    margin-right: -4px;
`

const CommandLine = styled.label`
    flex: 1;
    display: flex;
    align-items: center;
    gap: 5px;
    padding: 0 6px;
    input {
        flex: 1;
        padding: 2px 0 0 4px;
        color: #222;
        font: italic 18px "Liberation Mono", monospace;
    }
    input::placeholder {
        color: #7b7d80;
        opacity: 1;
    }
`

const UpCaret = styled(Caret)`
    transform: rotate(180deg);
`

const Watermark = styled.div`
    position: absolute;
    z-index: 5;
    bottom: 14px;
    left: 0;
    right: 0;
    display: flex;
    flex-direction: column;
    align-items: center;
    color: rgba(188, 189, 191, 0.42);
    pointer-events: none;
    font: bold 37px/48px "Liberation Sans", sans-serif;
    strong {
        margin-bottom: -8px;
        font: bold 66px/78px "DejaVu Sans", sans-serif;
    }
`

/* ---------- status bar ---------- */

const StatusBar = styled.footer`
    display: flex;
    height: 36px;
    padding-left: 15px;
    border-top: 1px solid #606060;
    flex: none;
`

const LayoutTab = styled.button`
    position: relative;
    z-index: ${({ $active }) => $active ? 1 : 0};
    width: ${({ $width }) => $width}px;
    height: 22px;
    color: ${({ $active }) => $active ? '#fff' : '#b9b9b9'};
    font-weight: ${({ $active }) => $active ? 700 : 400};
    line-height: 20px;
    &::before, &::after {
        content: '';
        position: absolute;
        z-index: -1;
        top: 0;
        bottom: 0;
        background: ${({ $active }) => $active ? 'linear-gradient(#505050, #858585)' : 'linear-gradient(#4a4a4a, #5d5d5d)'};
    }
    &::before {
        left: 0;
        right: 45%;
        border-radius: 0 0 0 6px;
        transform: skewX(18deg);
    }
    &::after {
        left: 50%;
        right: 0;
        border-radius: 0 0 6px 0;
        transform: skewX(-18deg);
    }
`

const StatusTools = styled.div`
    display: flex;
    gap: 1px;
    margin-left: auto;
    height: 32px;
`

const StatusCell = styled.div`
    display: flex;
    align-items: center;
    justify-content: space-evenly;
    width: ${({ $width }) => $width}px;
    background: #4b4b4b;
    border: 1px solid #7a7a7a;
    white-space: nowrap;
`

/* ---------- floor plan ---------- */

const walls = `M266 872V785H328V591H395V494H433V395H464V342L471 300 506 206H558V228H746V206H938V244H982V872Z
M558 206V300M650 228V312H560M499 244H558M470 345H650M585 345V390M616 392V345M433 395H650M650 345V505M562 398V525
M508 398V530H562M508 530V594H592M476 494V594H395M433 494H476M371 594V690M331 694H636M300 788V872M420 772V872
M432 772V850H465M465 735V872M508 735H745M465 770H650M558 770V850H650M650 700V872M746 228V505M746 244H938M842 244V425
M938 244V345H982M870 345H938M886 345V405M842 460V520M780 455H842M650 455H735M746 520H980M886 405V520M886 440H982
M746 592H980M746 592V870M780 625V650H842M842 680V780M842 780V845M746 848H842M886 592V770M870 770H982M938 770V872
M886 672H960M938 822H982M592 507H668V640H592ZM648 680V735H745V680M508 440H562M328 591H371M746 520V600`

const thin = `M565 402 646 502M646 402 565 502M855 526 978 588M978 526 855 588M130 643H1130M699 130V985M842 942V960
M580 520V640M676 512V650H580M720 515H865V600H720ZM640 672H762V746H640ZM600 510V636M660 510V636
M603 515h54M603 522h54M603 529h54M603 536h54M603 543h54M603 550h54M603 557h54M603 564h54M603 571h54M603 578h54M603 585h54M603 592h54M603 599h54M603 606h54
M745 528V590M752 528V590M759 528V590M766 528V590M773 528V590M780 528V590M787 528V590M794 528V590M801 528V590M808 528V590M815 528V590
M512 445h46M512 455h46M512 465h46M512 475h46M910 445V515M920 445V515M930 445V515M945 445V515M910 600V668M920 600V668M930 600V668M945 600V668
M575 800H640M575 815H640M600 790V850M612 790V850M560 318q24-8 20-26M718 458q-4-24 18-28M712 500q20-18 42 0M484 500q-2-24 14-26
M456 520q2 22 22 22M560 345q-20-4-16-26M850 404q-2-18 16-22M888 420q18 0 18 16M850 730q-2-18 16-22M888 690q18 0 18-16
M484 776q4 18 24 18M600 745q22-6 24 18M575 675q6-18 26-14M610 700q18-2 24 16M575 770q-2 18 14 20M640 770q2 18-14 20`

const blobs = `M584 258h34M492 296h60M670 316h34M690 362h24M782 316h24M780 362h26M822 224h16M440 413h60M908 393h58M382 720h36M358 768h24
M393 628h30M490 626h24M772 716h26M664 824h62M482 832h26M856 804h36M906 717h56M342 608h18M416 550h30M548 550h20M818 482h26M722 500h20
M720 612h20M495 384h50M436 834h22M498 350h44M590 830h40M768 858h14M915 460h30M915 622h30M790 540h36M790 565h30M905 816h4`

const squares = [
    [604, 270], [699, 285], [794, 300], [889, 295], [699, 393], [794, 403], [933, 393], [472, 447], [436, 543], [411, 643], [484, 643],
    [555, 643], [798, 688], [362, 741], [699, 771], [798, 792], [933, 722], [889, 820], [699, 835], [362, 825], [511, 820],
]

const lamps = [
    [526, 226], [796, 226], [888, 226], [960, 292], [580, 328], [628, 328], [495, 369], [555, 368], [617, 369], [534, 427], [534, 493],
    [495, 522], [532, 553], [571, 553], [495, 572], [697, 478], [697, 522], [697, 567], [697, 610], [697, 655], [349, 643], [865, 373],
    [865, 436], [808, 496], [860, 496], [910, 482], [956, 482], [808, 619], [860, 619], [910, 634], [956, 634], [865, 676], [865, 742],
    [509, 707], [509, 723], [600, 707], [600, 723], [440, 740], [440, 826], [284, 826], [580, 808], [628, 808], [794, 859], [960, 790],
]

const switches = [
    [549, 231], [553, 308], [592, 306], [645, 317], [494, 349], [587, 337], [605, 349], [855, 235], [877, 337], [975, 330], [515, 409],
    [846, 418], [892, 401], [709, 443], [752, 476], [787, 468], [892, 473], [952, 448], [476, 490], [521, 520], [515, 544], [471, 549],
    [590, 657], [365, 681], [611, 702], [460, 743], [505, 741], [513, 776], [593, 777], [616, 777], [656, 788], [787, 605], [752, 631],
    [892, 632], [952, 665], [892, 703], [873, 718], [875, 776], [976, 787], [294, 862], [821, 856],
]

const bubbles = [
    [604, 210], [699, 210], [451, 378], [417, 443], [382, 543], [313, 738], [393, 886], [516, 886], [699, 886], [889, 886], [995, 402],
    [995, 714], [510, 345], [476, 355], [510, 500], [495, 545], [888, 458], [965, 452], [655, 622], [638, 662], [888, 660], [965, 660],
    [497, 772], [606, 752], [577, 772], [632, 772], [786, 488], [786, 628], [856, 400], [856, 716], [728, 455], [550, 666], [960, 335],
]

// [x, y, line colour, diamond fill]
const markers = [
    [118, 578, '#63676b', '#50555a'], [117, 641, '#63676b', '#50555a'], [1132, 578, '#63676b', '#50555a'], [1134, 641, '#63676b', '#50555a'],
    [794, 112, '#5a5e62', '#5a5e62'], [702, 114, '#00e000', '#50555a'], [702, 1003, '#a5a7a9', '#7b7e81'], [794, 1003, '#8a8c8e', '#6c6f72'],
]

const notes = [
    [1029, 192, 46, 14], [1026, 207, 146, 6], [1026, 219, 69, 12], [1052, 237, 160, 6], [1052, 249, 128, 6], [1052, 261, 128, 9],
    [1052, 273, 128, 9], [1052, 285, 180, 9], [1052, 297, 137, 9], [1052, 309, 137, 9], [1026, 336, 37, 14], [1052, 354, 26, 9],
]

const rowsFrom = (start, end, step) => Array.from({ length: Math.ceil((end - start) / step) }, (_, i) => start + i * step)

function FloorPlan() {
    return (
        <Drawing $left={589} $top={78} width="550" height="380" viewBox="0 0 1568 1140" preserveAspectRatio="none" aria-label="Floor plan">
            <g fill="none" strokeWidth="3">
                <path d="M18 92V51H60M1488 51H1527V92M18 1068V1110H60M1488 1110H1527V1068" stroke="#7c0020" />
                <path d="M24 55H1524V1105H24Z" stroke="#74777a" />
                <path d="M61 82H1353V1078H61ZM1360 82H1499V1078H1360ZM1360 244h139M1360 780h139M1360 895h139M1360 943h139M1360 955h139M1360 1018h139M1360 1050h139" stroke="#7c0020" />
                <path d="M24 55H60M24 55V92M1488 55H1524V92M24 1068V1105H60M1488 1105H1524V1068" stroke="#8f9193" />
            </g>
            <path d={walls} fill="none" stroke="#5a5f64" strokeWidth="9" />
            <path d={walls} fill="none" stroke="#212830" strokeWidth="3" />
            <path d={thin} fill="none" stroke="#555a5f" strokeWidth="2.500" />
            <path d={blobs} fill="none" stroke="#5c6165" strokeWidth="12" strokeDasharray="5 1 8 2 3 1" />
            <path d={blobs} transform="translate(6 8)" fill="none" stroke="#565b60" strokeWidth="8" strokeDasharray="9 3 5 6 3 30" />
            {bubbles.map(([x, y]) => <circle key={`${x}-${y}`} cx={x} cy={y} r="8" fill="#212830" stroke="#5a5f63" strokeWidth="3" />)}
            {squares.map(([x, y]) => (
                <g key={`${x}-${y}`}>
                    <rect x={x - 10} y={y - 10} width="20" height="20" fill="#00e5f2" />
                    <path d={`M${x - 5} ${y - 3}h10M${x - 5} ${y + 3}h10`} stroke="#1d5560" strokeWidth="2.500" />
                </g>
            ))}
            <rect x="493" y="290" width="39" height="12" fill="#00e5f2" />
            {lamps.map(([x, y]) => (
                <g key={`${x}-${y}`}>
                    <circle cx={x} cy={y} r="8.500" fill="#00dbe8" />
                    <path d={`M${x - 4} ${y - 4}l8 8M${x + 4} ${y - 4}l-8 8`} stroke="#17616c" strokeWidth="2.500" />
                </g>
            ))}
            {switches.map(([x, y]) => <path key={`${x}-${y}`} d={`M${x + 5} ${y - 6}l-5 1 1 5-6 6`} fill="none" stroke="#00f000" strokeWidth="4" />)}
            {markers.map(([x, y, color, fill]) => (
                <g key={`${x}-${y}`} stroke={color}>
                    <path d={`M${x - 20} ${y}l20-20 20 20-20 20z`} fill={fill} stroke={fill} strokeWidth="2" />
                    <circle cx={x} cy={y} r="13" fill="#30363c" strokeWidth="4" />
                    <path d={`M${x - 12} ${y}h24M${x} ${y - 12}v24`} fill="none" strokeWidth="4" />
                </g>
            ))}
            <path d="M780 108q14-22 28 0z" fill="#00e000" />
            <path d="M700 97q18 2 18 18" fill="none" stroke="#e8e000" strokeWidth="3" />

            {notes.map(([x, y, w, h]) => <rect key={y} x={x} y={y} width={w} height={h} fill="#fff" />)}
            <path d="M1030 237V318" stroke="#fff" strokeWidth="3" strokeDasharray="9 4" />
            <path d="M1026 358h26" stroke="#e00000" strokeWidth="4" />
            <path d="M54 188h6M54 972h6M1242 77h4M1500 188h5M1500 402h5M1500 519h5M1500 774h5M1500 972h5" stroke="#00f000" strokeWidth="6" />

            <text x="594" y="1047" fill="#00f000" stroke="#00f000" strokeWidth="1" fontFamily="Liberation Mono, monospace" fontWeight="bold" fontSize="16">ko' HbO ggLv HS,B</text>
            <path d="M610 1051H757" stroke="#a0a2a4" strokeWidth="3" />
            <circle cx="774" cy="1051" r="20" fill="none" stroke="#8d97bd" strokeWidth="4" />
            <path d="M755 1054h38" stroke="#c4c6c8" strokeWidth="6" />
            <text x="769" y="1047" fill="#fff" fontFamily="Liberation Sans, sans-serif" fontWeight="bold" fontSize="15">F</text>
            <text x="738" y="1065" fill="#00f000" fontFamily="Liberation Mono, monospace" fontWeight="bold" fontSize="16">1 : NO</text>

            {/* title block */}
            <path d="M1410 124H1462V190H1388Z" fill="#71696a" stroke="#f2f2f2" strokeWidth="4" />
            <path d="m1400 180 14-40 8 34 10-44 8 30 14-20-4 40-20-22-12 20" fill="none" stroke="#c32028" strokeWidth="4" strokeDasharray="6 3" />
            <path d="M1366 91h17M1366 249h17M1366 786h34M1366 900h42M1366 960h42M1366 639h17" stroke="#00f000" strokeWidth="6" />
            <path d="M1360 256h139M1360 646h139M1360 793h139" stroke="#b5b7b8" strokeWidth="4" />
            <path d="m1476 250 8-6h12l4 8-10 5h-10zM1452 640l20-4h26v9h-40zM1422 787l16-4h60l2 8h-70zM1472 902l10-6h16v10h-22zM1472 964l8-6h18v10h-22z" fill="#00f000" />
            <path
                d="M1390 283H1492V302L1495 320V400L1492 425H1382L1372 415 1382 406V398L1380 345 1368 330 1384 320 1386 312 1374 302 1390 294Z"
                fill="#ff0"
                stroke="#ff0"
                strokeWidth="5"
                strokeDasharray="5 2"
            />
            <path d="M1402 350h84M1394 361h66M1388 391h34M1440 391h50M1400 408h50" stroke="#6f6e22" strokeWidth="2.500" strokeDasharray="3 7 5 4" />
            {rowsFrom(500, 632, 7).map(y => <path key={y} d={`M${y > 552 ? 1363 : 1360} ${y}H1498`} stroke="#9c9ea0" strokeWidth="4" />)}
            <path d="M1429 498V545M1375 552V632M1393 552V632M1455 552V632M1470 552V632M1484 552V632" stroke="#a5a7a9" strokeWidth="3" />
            <path d="M1405 548h52M1366 614h40M1410 624h28M1442 614h55M1366 625h22M1454 624h40" stroke="#00e800" strokeWidth="4" />
            <rect x="1384" y="670" width="100" height="61" fill="none" stroke="#fff" strokeWidth="4" />
            <path d="M1403 699h60" stroke="#fff" strokeWidth="6" />
            <path d="m1390 747 6-4h86l4 6-10 5-14 5h-40l-10-5h-12z" fill="#fe0000" stroke="#fe0000" strokeWidth="3" strokeDasharray="4 2" />
            <path d="M1380 848v-10h8v-12l26-24h58v32h5v14z" fill="#b81d25" />
            <path d="M1386 820h16l14 12h60v7h-66l-12-10h-12z" fill="#777" />
            <path d="M1430 807v22M1446 807h-9v20h9M1456 804v26M1466 807v20" fill="none" stroke="#3a1b20" strokeWidth="3" />
            <path d="m1366 860 10-4h118l4 6-6 5h-46v9h-34v-9h-42z" fill="#0000fe" stroke="#0000fe" strokeWidth="3" strokeDasharray="4 2" />
            <path d="M1377 879h63M1443 879h42" stroke="#f0d590" strokeWidth="6" />
            <path d="M1377 888h100" stroke="#00e5f2" strokeWidth="6" strokeDasharray="12 2" />
            <path d="m1384 935 6-14h18l8-10h44l10 12h12l6 12z" fill="#00f000" stroke="#00f000" strokeWidth="3" strokeDasharray="4 2" />
            <path d="M1430 912v8" stroke="#e00000" strokeWidth="5" />
            <path d="M1395 991h84" stroke="#fe0000" strokeWidth="9" strokeDasharray="9 2 14 1" />
            <path d="M1363 1033h134M1475 1018v32M1363 1067h134M1407 1053v27M1453 1053v27M1500 295h8M1500 508h8M1500 626h8M1500 868h8" stroke="#a5a7a9" strokeWidth="4" />
            <path d="M1393 1024h38M1478 1024h20M1400 1041h25M1482 1041h6M1377 1057h14M1414 1057h28M1463 1057h20M1398 1072h8M1425 1072h8M1471 1072h6" stroke="#00f000" strokeWidth="5" />
        </Drawing>
    )
}

/* ---------- legend sheet ---------- */

// [top edge, symbol colour, lines]
const legend = [
    [49, '', []],
    [65, '#00e5f2', ['NORMAL DISTRIBUTION PANEL.']],
    [89, '#0000f0', ['EMERGENCY DISTRIBUTION PANEL.']],
    [109, '#00e800', ['UNINTERRUPTIBLE DISTRIBUTION PANEL (UPS)']],
    [130, '#00e800', ['LIGHTING CONTROL PANEL.']],
    [149, '#00e5f2', ['LED LIGHTING LUMINAIRE, RECESSED MOUNTED, 600x600mm', '220V, 50HZ, 4000K, 2560 LUMENS, PACK PHILIPS RC125B', 'F=800lm/800 AC- WLD (OR EQUIVALENT)']],
    [194, '#0000f0', ['SAME AS L1 BUT FEEDS FROM EMERGENCY SOURCE']],
    [221, '#00e800', ['SAME AS L1 BUT WITH BACK-UP BATTERY FOR TWO HOURS.']],
    [245, '#00e5f2', ['LED LIGHTING LUMINAIRE, RECESSED MOUNTED 220V 50HZ,', '3000K, 2000 LUMENS, PACK PHILIPS CERTUS PAC', 'F=800lm/800 C (OR EQUIVALENT)']],
    [293, '#0000f0', ['SAME AS L4 BUT FEEDS FROM EMERGENCY SOURCE']],
    [317, '#00e800', ['SAME AS L4 BUT WITH BACK-UP BATTERY FOR TWO HOURS.']],
    [341, '#0000f0', ['SAME AS L4 BUT IP44']],
    [365, '#00e5f2', ['LED LIGHTING LUMINAIRE, SURFACE MOUNTED, 220V 50HZ,', '30 WATT, 2500 LUMENS, IP65, PHILIPS BATTEN', 'F=800lm/800 WLC-120 (OR EQUIVALENT)']],
    [415, '#0000f0', ['SAME AS L8 BUT FEEDS FROM EMERGENCY SOURCE']],
    [440, '#00e800', ['SAME AS L8 BUT WITH BACK-UP BATTERY FOR TWO HOURS.']],
    [463, '#00e5f2', ['MIRROR WALL LIGHT 742mmx600x2 Lxhx40mm LED LIGHT', 'IP21, 22 WATT, 220V, 50HZ']],
    [499, '#0000f0', ['SAME AS L11 BUT FEEDS FROM EMERGENCY SOURCE']],
    [523, '#00e5f2', ['CHANDELIER 75 WATT, 220V, 50HZ, IP21.']],
    [547, '#00e5f2', ['FENCE LIGHTING LED LUMINAIRE 22 WATT 220V - 50HZ.']],
    [574, '#00e5f2', ['UP LIGHT PHILIPS 100 WATT LED, 220V, 50 HZ.']],
    [601, '#f000f0', ['SURFACE MOUNTED VIA HANGING CLIP FLUSHED TYPE LED', 'EXIT SIGN LEGEND, LUMENS AS PER SUPPLIER, TO RUN', 'FOUR CONTINUOUS, IDEAL FOR AUDIO TRANSPARENT', 'IN INSULATED EXIT.']],
    [655, '#f000f0', ['SELF CONTAINED EMERGENCY LED LIGHTING FIXTURE', 'IP65 220V, BATTERIES 3.6 V / 4AH, FIXED BUFFERED', 'F WHISPER CUT DIRECTION REFER TO ARCHITECTURE PLANS']],
    [703, '#e8a860', ['EXHAUST FAN OUTLET REFER TO HVAC PLANS.']],
    [727, '#00e800', ['ONE GANG, ONE WAY SWITCH 220V, 10 AMPERE']],
    [749, '#00e800', ['SAME AS ABOVE BUT WEATHER PROOF.']],
    [773, '#00e800', ['TWO GANG, ONE WAY SWITCH 220V, 10 AMPERE']],
    [796, '#00e800', ['SAME AS ABOVE BUT WEATHER PROOF.']],
    [817, '#00e800', ['ONE GANG, TWO WAY SWITCH 220V, 10 AMPERE']],
    [841, '#00e800', ['SAME AS ABOVE BUT WEATHER PROOF.']],
    [863, '#00e800', ['WEATHER PROOF WATERTIGHT OUTLET 220V, 10 AMPERE']],
]

const switchShapes = ['M66 744l6-2-2-6 5-3', 'M66 766l4-8 2 4 4-4', 'M66 790l6-2-2-6 5-3', 'M66 812l4-8 2 4 4-4', 'M62 824l6 4-1 5 12 3', 'M62 847l6 4 2 5 10 4', 'M64 868l14 12M64 880l12-12']

function Legend() {
    return (
        <Drawing $left={1469} $top={78} width="160" height="310" viewBox="0 0 480 930" aria-label="Legend">
            <rect x="53" y="50" width="38" height="13" fill="#00e5f2" />
            <rect x="99" y="50" width="12" height="11" fill="#00e5f2" />
            <rect x="186" y="51" width="63" height="9" fill="#00e5f2" />
            {legend.map(([top, color, lines], i) => {
                const bottom = i + 1 < legend.length ? legend[i + 1][0] : 887
                const middle = (top + bottom) / 2
                const wide = i === 12 || i === 13 || i === 14
                return (
                    <Fragment key={top}>
                        <path d={`M51 ${top}H426`} stroke="#00f0f8" strokeWidth="3" />
                        {color && i < 23 && (
                            <rect
                                x={wide ? 57 : 63}
                                y={middle - 4}
                                width={wide ? 33 : 18}
                                height="9"
                                fill={lines.length > 2 ? 'none' : color}
                                stroke={color}
                                strokeWidth="3"
                            />
                        )}
                        {color && <rect x={i > 22 ? 93 : i > 13 ? 96 : 99} y={middle - 6} width={i > 22 ? 20 : i > 13 ? 15 : 9} height="12" fill="#00e5f2" />}
                        {lines.map((line, n) => (
                            <text
                                key={line}
                                x="120"
                                y={middle + 4 + (n - (lines.length - 1) / 2) * 13}
                                fill="#fff"
                                stroke="#fff"
                                strokeWidth="1"
                                fontFamily="Liberation Mono, monospace"
                                fontWeight="bold"
                                fontSize="10"
                            >{line}</text>
                        ))}
                    </Fragment>
                )
            })}
            {switchShapes.map(d => <path key={d} d={d} fill="none" stroke="#00e800" strokeWidth="4" />)}
            <path d="M51 887H426M52 48V888M92 48V888M118 48V888M425 48V888" stroke="#00f0f8" strokeWidth="3" />
            <path d="M76 763h14M76 808h14M76 847h14M78 874h14M78 346h8" stroke="#fff" strokeWidth="9" />
        </Drawing>
    )
}

const ribbonTabs = [
    'Home', 'Insert', 'Annotate', 'Parametric', 'View', 'Manage', 'Output', 'Add-ins', 'A360',
    'Express Tools', 'Featured Apps', 'BIM 360', 'Performance',
]

const layerIcons = [
    ['layOff', 'layIso', 'layFreeze', 'layLock', 'layCurrent'],
    ['layOn', 'layUniso', 'layThaw', 'layUnlock', 'layMatch'],
]

function RibbonPanels() {
    return (
        <Ribbon>
            <Panel title="Draw" width={279} columns="52px 54px 70px 44px 1fr">
                <Large icon="line" label="Line" />
                <Large icon="polyline" label="Polyline" />
                <Large icon="circle" label="Circle" menu />
                <Large icon="arc" label="Arc" menu />
                <SmallColumn>
                    <Small icon="rectangle" menu />
                    <Small icon="ellipse" menu />
                    <Small icon="hatch" menu />
                </SmallColumn>
            </Panel>
            <Panel title="Modify" width={315} columns="91px 88px 96px 1fr">
                <SmallColumn $pad={6}>
                    <Small icon="move" label="Move" />
                    <Small icon="copy" label="Copy" />
                    <Small icon="stretch" label="Stretch" />
                </SmallColumn>
                <SmallColumn $pad={6}>
                    <Small icon="rotate" label="Rotate" />
                    <Small icon="mirror" label="Mirror" />
                    <Small icon="scale" label="Scale" />
                </SmallColumn>
                <SmallColumn $pad={6}>
                    <Small icon="trim" label="Trim" menu menuGap={8} />
                    <Small icon="fillet" label="Fillet" menu menuGap={8} />
                    <Small icon="array" label="Array" menu menuGap={3} />
                </SmallColumn>
                <SmallColumn $pad={5}>
                    <Small icon="erase" />
                    <Small icon="explode" />
                    <Small icon="offset" />
                </SmallColumn>
            </Panel>
            <Panel title="Annotation" width={184} columns="58px 74px 1fr">
                <Large icon="text" label="Text" menu />
                <Large icon="dimension" label="Dimension" />
                <SmallColumn $pad={6}>
                    <Small icon="linear" menu />
                    <Small icon="leader" menu />
                    <Small icon="table" />
                </SmallColumn>
            </Panel>
            <Panel title="Layers" width={341} columns="77px 1fr">
                <Large icon="layerProps" label={'Layer\nProperties'} />
                <LayerTools>
                    <Combo>
                        <Icon name="bulb" />
                        <Icon name="sun" />
                        <Icon name="unlock" />
                        <Swatch $size={18} $color="#fff" $edge="#000" />
                        <select aria-label="Layer"><option>0</option></select>
                        <Caret $size={5} />
                    </Combo>
                    {layerIcons.map(row => (
                        <IconRow key={row[0]}>{row.map(name => <Small key={name} icon={name} />)}</IconRow>
                    ))}
                </LayerTools>
            </Panel>
            <Panel title="Block" width={101} columns="52px 1fr">
                <Large icon="insert" label="Insert" menu />
                <SmallColumn $pad={3}>
                    <Small icon="blockCreate" />
                    <Small icon="blockEdit" />
                    <Small icon="blockAttr" menu menuGap={0} />
                </SmallColumn>
            </Panel>
            <Panel title="Properties" width={277} columns="76px 25px 1fr" launcher>
                <Large icon="match" label={'Match\nProperties'} />
                <SmallColumn $pad={2}>
                    <Small icon="wheel" />
                    <Small icon="weight" />
                    <Small icon="ltype" />
                </SmallColumn>
                <ComboStack>
                    <Combo $pad={14} $gap={12}>
                        <Swatch $size={20} $color="#7d7d7d" $edge="#aaa" />
                        <select aria-label="Colour"><option>8</option></select>
                        <Caret $size={5} />
                    </Combo>
                    <Combo $pad={10} $gap={3}>
                        <SampleLine $thick={2} />
                        <select aria-label="Lineweight"><option>ByLayer</option></select>
                        <Caret $size={5} />
                    </Combo>
                    <Combo $pad={10} $gap={3}>
                        <SampleLine $thick={1} />
                        <select aria-label="Linetype"><option>ByLayer</option></select>
                        <Caret $size={5} />
                    </Combo>
                </ComboStack>
            </Panel>
            <Panel title="Groups" width={85} columns="50px 1fr">
                <Large icon="group" label="Group" />
                <SmallColumn $pad={4}>
                    <Small icon="ungroup" />
                    <Small icon="groupEdit" />
                    <PressedButton aria-label="Group selection"><Icon name="groupSelect" /></PressedButton>
                </SmallColumn>
            </Panel>
            <Panel title="Utilities" width={121} columns="86px 1fr">
                <Large icon="measure" label="Measure" menu />
                <SmallColumn $pad={4}>
                    <Small icon="quickCalc" />
                    <Small icon="point" />
                    <Small icon="calculator" />
                </SmallColumn>
            </Panel>
            <Panel title="Clipboard" width={98} columns="66px 1fr" plain>
                <Large icon="paste" label="Paste" menu />
                <SmallColumn $pad={2}>
                    <Small icon="cut" />
                    <Small icon="copyClip" />
                </SmallColumn>
            </Panel>
            <Panel title="View" width={80} columns="1fr" launcher>
                <Large icon="base" label="Base" menu />
            </Panel>
        </Ribbon>
    )
}

export default function App() {
    return (
        <Window>
            <GlobalStyle />
            <svg width="0" height="0" style={{ position: 'absolute' }}>
                <linearGradient id="disc" x1="0" y1="0" x2="0" y2="1">
                    <stop offset="0" stopColor="#fbfbfb" />
                    <stop offset="1" stopColor="#c4c8cb" />
                </linearGradient>
            </svg>

            <TitleBar>
                <AppButton aria-label="Application menu"><Icon name="logo" size={26} /><Caret $color="#222" /></AppButton>
                <QuickAccess>
                    {['newFile', 'open', 'save', 'saveAs', 'print'].map(name => (
                        <FlatButton key={name} aria-label={name}><Icon name={name} /></FlatButton>
                    ))}
                    <FlatButton $gap={9} aria-label="Undo"><Icon name="undo" /><Caret /></FlatButton>
                    <FlatButton $gap={9} aria-label="Redo"><Icon name="redo" /><Caret /></FlatButton>
                    <FlatButton aria-label="Customize"><Icon name="menuLine" size={11} /></FlatButton>
                </QuickAccess>
                <Title><span>Autodesk AutoCAD 2016</span><span>Matroug Tower.dwg</span></Title>
                <InfoCenter>
                    <SideArrow />
                    <SearchInput placeholder="Type a keyword or phrase" aria-label="Search" />
                    <FlatButton aria-label="Find"><Icon name="binoculars" size={22} /></FlatButton>
                    <SignIn><Icon name="person" size={22} /><span>Sign In</span><Caret /></SignIn>
                    <FlatButton aria-label="Exchange"><Icon name="exchange" /></FlatButton>
                    <FlatButton $gap={7} aria-label="A360"><Icon name="a360" size={22} /><Caret /></FlatButton>
                    <Divider />
                    <FlatButton $gap={9} aria-label="Help"><Icon name="help" size={22} /><Caret /></FlatButton>
                </InfoCenter>
                <WindowButtons>
                    {['minimize', 'maximize', 'close'].map(name => (
                        <WindowButton key={name} aria-label={name}><Icon name={name} size={13} /></WindowButton>
                    ))}
                </WindowButtons>
            </TitleBar>

            <RibbonTabs>
                {ribbonTabs.map((tab, index) => <RibbonTab key={tab} $active={index === 0}>{tab}</RibbonTab>)}
                <RibbonTab as="div">
                    <FlatButton $gap={8} aria-label="Minimize ribbon"><Icon name="collapse" size={16} /><Caret /></FlatButton>
                </RibbonTab>
            </RibbonTabs>

            <RibbonPanels />

            <DocTabs>
                <DocTab $width={155}>Start</DocTab>
                <DocTab $width={178}>matrouh tower dlx* <Icon name="tabClose" size={12} /></DocTab>
                <DocTab $width={160} $active>Matroug Tower* <Icon name="tabClose" size={12} /></DocTab>
                <AddTab $margin="0 0 2px 9px" $radius="4px 14px 4px 4px" aria-label="New drawing"><Icon name="tabPlus" size={11} /></AddTab>
            </DocTabs>

            <Canvas>
                <ViewLabel>[−][Top][2D Wireframe]</ViewLabel>
                <Drawing $left={608} $top={39} width="100" height="98" viewBox="0 0 100 98">
                    <path d="M1 49.500H97M49.500 1V97" stroke="#fff" />
                    <rect x="46.500" y="46.500" width="6" height="6" fill="#212830" stroke="#fff" />
                </Drawing>
                <FloorPlan />
                <Legend />

                <UcsIcon width="76" height="74" viewBox="0 0 76 74" fill="none" stroke="#fff">
                    <path d="M6.500 18V67.500H57M62 54l12 13M74 54 62 67M8 1l6 6 6-6M14 7v7" />
                    <rect x="2.500" y="63.500" width="8" height="8" />
                </UcsIcon>

                <ViewButtons>
                    {['vpMin', 'vpRestore', 'vpClose'].map(name => (
                        <FlatButton key={name} aria-label={name}><Icon name={name} size={12} /></FlatButton>
                    ))}
                </ViewButtons>
                <ViewCube>
                    <Direction $area="1 / 2" $place="start center">N</Direction>
                    <Direction $area="2 / 1" $place="center start">W</Direction>
                    <TopFace>TOP</TopFace>
                    <Direction $area="2 / 3" $place="center end">E</Direction>
                    <Direction $area="3 / 2" $place="end center">S</Direction>
                </ViewCube>
                <Wcs>WCS <Caret $color="#7d8185" /></Wcs>
                <NavBar>
                    <Icon name="dot" size={9} />
                    <FlatButton aria-label="Steering wheel"><Icon name="navWheel" size={23} /></FlatButton>
                    <Caret $color="#43474c" $size={3} />
                    <hr />
                    <FlatButton aria-label="Pan"><Icon name="hand" size={23} /></FlatButton>
                    <FlatButton aria-label="Zoom"><Icon name="zoom" size={23} /></FlatButton>
                    <Caret $color="#43474c" $size={3} />
                    <FlatButton aria-label="Orbit"><Icon name="orbit" size={23} /></FlatButton>
                    <Caret $color="#43474c" $size={3} />
                    <hr />
                    <FlatButton aria-label="ShowMotion"><Icon name="motion" size={23} /></FlatButton>
                    <Icon name="dot" size={9} />
                </NavBar>

                <CommandBar>
                    <CommandTools>
                        <Handle />
                        <FlatButton aria-label="Close command line"><Icon name="barClose" size={11} /></FlatButton>
                        <FlatButton aria-label="Customize"><Icon name="wrench" size={18} /></FlatButton>
                    </CommandTools>
                    <CommandLine>
                        <Icon name="prompt" size={18} />
                        <Caret $color="#55585b" />
                        <input placeholder="Type a command" aria-label="Command" />
                        <UpCaret $color="#222" />
                    </CommandLine>
                </CommandBar>
            </Canvas>

            <StatusBar>
                <LayoutTab $width={73} $active>Model</LayoutTab>
                <LayoutTab $width={80}>Layout1</LayoutTab>
                <LayoutTab $width={82}>Layout2</LayoutTab>
                <AddTab $margin="1px 0 0 6px" $radius="12px 4px 12px 4px" aria-label="New layout"><Icon name="tabPlus" size={11} /></AddTab>
                <StatusTools>
                    <StatusCell $width={61}><button>MODEL</button></StatusCell>
                    <StatusCell $width={82}><Icon name="grid" /><Icon name="snap" /><Caret /></StatusCell>
                    <StatusCell $width={128}><Icon name="ortho" /><Icon name="polar" /><Caret /><Icon name="iso" /><Caret /></StatusCell>
                    <StatusCell $width={81}><Icon name="track" /><Icon name="osnap" /><Caret /></StatusCell>
                    <StatusCell $width={133}><Icon name="annoBlue" /><Icon name="annoAuto" /><Icon name="anno" /><button>1:1</button><Caret /></StatusCell>
                    <StatusCell $width={50}><Icon name="gear" size={18} /><Caret /></StatusCell>
                    <StatusCell $width={32}><Icon name="plus" size={18} /></StatusCell>
                    <StatusCell $width={32}><Icon name="shapes" /></StatusCell>
                    <StatusCell $width={32}><Icon name="clean" /></StatusCell>
                    <StatusCell $width={31}><Icon name="tray" /></StatusCell>
                    <StatusCell $width={62}><Icon name="expand" /><Icon name="burger" /></StatusCell>
                </StatusTools>
            </StatusBar>

            <Watermark><strong lang="ar">مستقل</strong>mostaql.com</Watermark>
        </Window>
    )
}
